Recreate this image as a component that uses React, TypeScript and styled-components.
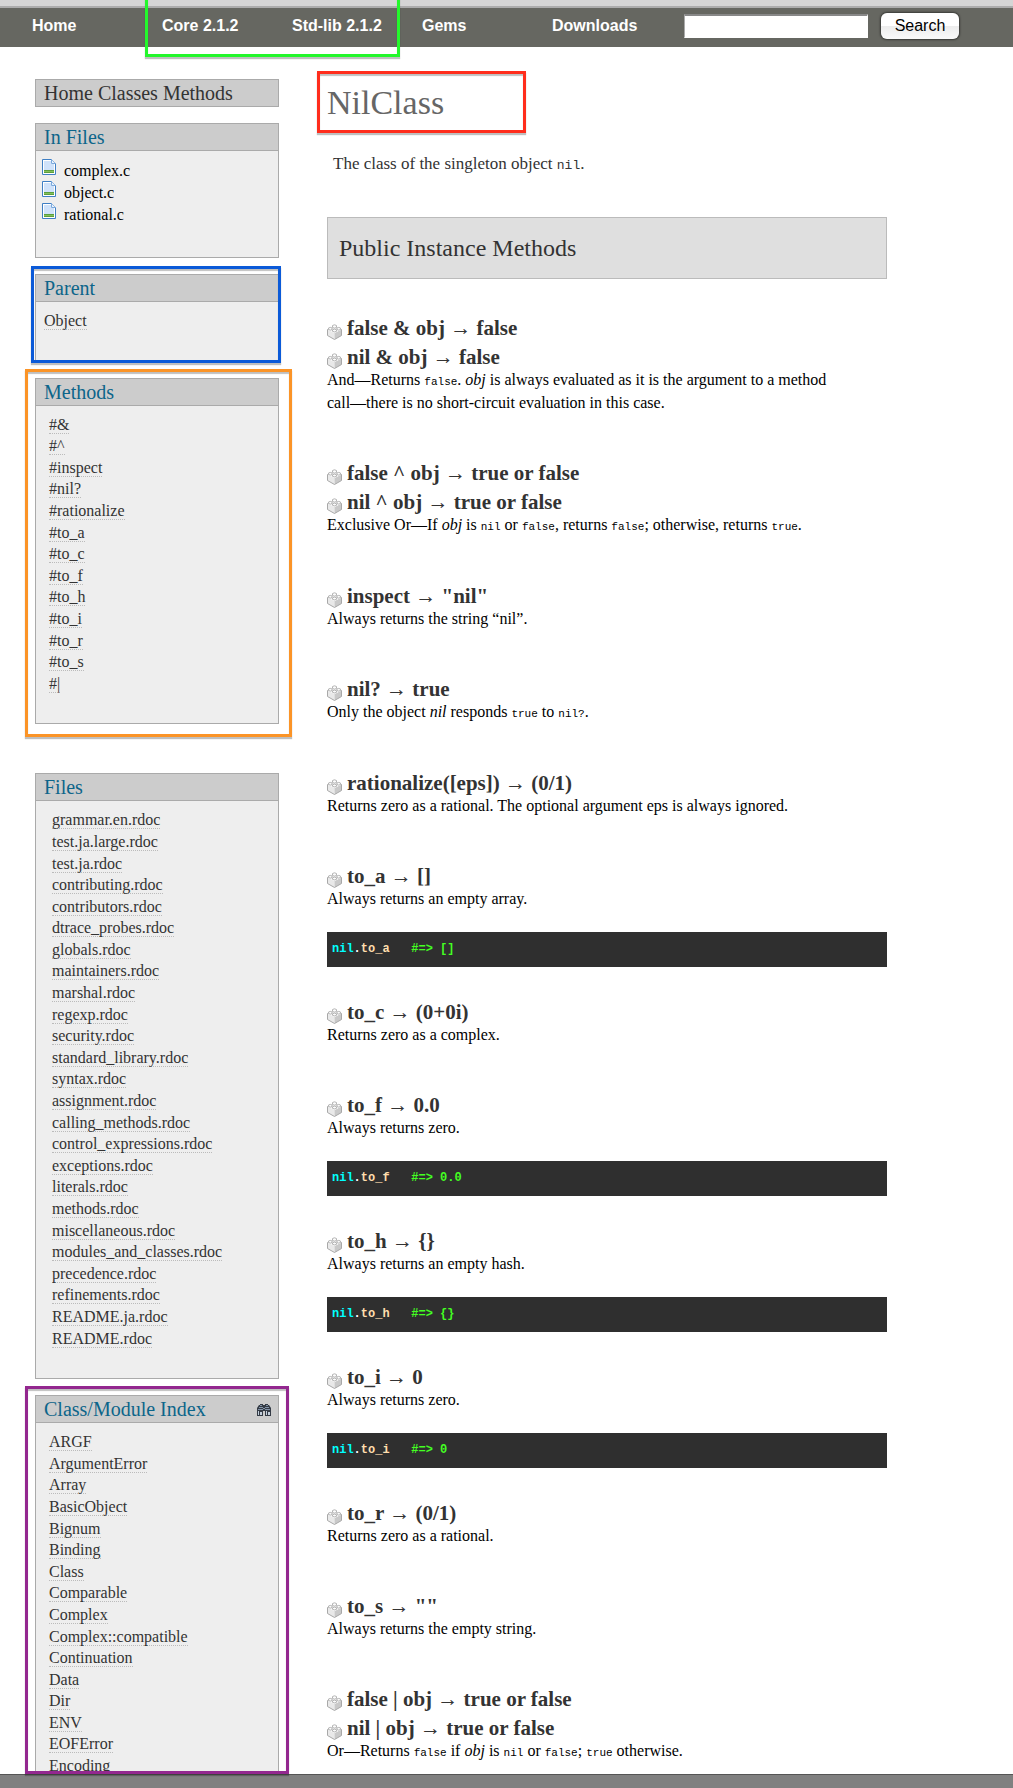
import React from "react";
import styled, { createGlobalStyle } from "styled-components";

const serif = `"Liberation Serif", "Times New Roman", serif`;
const sans = `"Liberation Sans", Arial, sans-serif`;
const mono = `"Liberation Mono", "Courier New", monospace`;

const GlobalStyle = createGlobalStyle`
  * { box-sizing: border-box; }
  body { margin: 0; background: #fff; color: #000; font-family: ${serif}; }
  h1, h2, h3, p, pre, ul { margin: 0; padding: 0; font-weight: normal; }
  ul { list-style: none; }
  a { color: inherit; text-decoration: none; }
`;

const Page = styled.div`
  display: flex;
  flex-direction: column;
  height: 100vh;
  overflow: hidden;
`;

const TopStrip = styled.div`
  flex: none;
  height: 8px;
  background: #d5d5d5;
  border-bottom: 2px solid #acacac;
`;

const NavBar = styled.header`
  flex: none;
  display: flex;
  align-items: center;
  height: 39px;
  padding-left: 32px;
  padding-bottom: 4px;
  background: #666761;
`;

const NavGroup = styled.nav`
  position: relative;
  display: flex;
`;

const NavLink = styled.a`
  width: 130px;
  color: #fff;
  font: bold 16px/20px ${sans};
`;

const SearchForm = styled.form`
  display: flex;
  align-items: center;
  gap: 13px;
  padding-left: 2px;
`;

const SearchInput = styled.input`
  width: 184px;
  height: 24px;
  padding: 0 4px;
  background: #fff;
  border: 1px solid #fff;
  border-top: 2px solid #888;
  border-left-color: #aaa;
  border-radius: 0;
  font: 16px/20px ${sans};
`;

const SearchButton = styled.button`
  width: 78px;
  height: 26px;
  padding: 0;
  color: #000;
  background: linear-gradient(#fff 50%, #ececec 50%, #fafafa);
  border: 0;
  border-radius: 6px;
  box-shadow: 0 0 2px 1px rgba(0, 0, 0, 0.45);
  font: 16px/20px ${sans};
`;

const Main = styled.main`
  flex: 1;
  min-height: 0;
  display: flex;
  gap: 48px;
  padding: 32px 32px 0 35px;
`;

const Sidebar = styled.aside`
  flex: none;
  width: 244px;
  display: flex;
  flex-direction: column;
  gap: 16px;
`;

const PanelWrap = styled.div<{ $spaceAfter?: boolean; $fill?: boolean }>`
  position: relative;
  flex: ${(p) => (p.$fill ? "1" : "none")};
  min-height: 0;
  margin-bottom: ${(p) => (p.$spaceAfter ? "33px" : "0")};
`;

const Panel = styled.section`
  max-height: 100%;
  overflow: hidden;
  background: #eee;
  border: 1px solid #aaa;
`;

const PanelTitle = styled.h2`
  display: flex;
  align-items: center;
  justify-content: space-between;
  height: 27px;
  padding: 0 7px 0 8px;
  color: #0c658a;
  background: #ccc;
  border-bottom: 1px solid #aaa;
  font-size: 20px;
  line-height: 24px;
`;

const LinkTrail = styled.nav`
  height: 28px;
  padding-left: 8px;
  color: #333;
  background: #ccc;
  border: 1px solid #aaa;
  font-size: 20px;
  line-height: 26px;
`;

const SourceList = styled.ul`
  padding: 8px 6px 32px;
`;

const SourceItem = styled.li`
  display: flex;
  align-items: flex-start;
  gap: 8px;
  height: 22px;
  font-size: 16px;
  line-height: 24px;
`;

const LinkList = styled.ul<{ $indent: number }>`
  padding: 8px 0 29px ${(p) => p.$indent}px;
  color: #333;
  font-size: 16px;
  line-height: 1.35;
`;

const DottedLink = styled.a`
  border-bottom: 1px dotted #bbb;
`;

const Outline = styled.span<{ $color: string; $inset: string }>`
  position: absolute;
  z-index: 2;
  inset: ${(p) => p.$inset};
  border: 3px solid ${(p) => p.$color};
  box-shadow: 0 2px 1px rgba(0, 0, 0, 0.25), inset 0 2px 1px rgba(0, 0, 0, 0.25);
  pointer-events: none;
`;

const Content = styled.article`
  flex: 1;
  min-width: 0;
  max-width: 560px;
`;

const TitleWrap = styled.div`
  position: relative;
  max-width: 189px;
`;

const Title = styled.h1`
  color: #666;
  font-size: 34px;
  line-height: 48px;
`;

const Intro = styled.p`
  padding: 25px 6px 41px;
  color: #333;
  font-size: 17px;
  line-height: 24px;

  code { font: 13px/20px ${mono}; }
`;

const SectionTitle = styled.h2`
  margin-bottom: 37px;
  padding: 0 11px;
  color: #333;
  background: #dfdfdf;
  border: 1px solid #bbb;
  font-size: 24px;
  line-height: 60px;
`;

const Method = styled.section<{ $hasCode?: boolean }>`
  padding-bottom: ${(p) => (p.$hasCode ? "33px" : "47px")};
`;

const Signatures = styled.div`
  display: grid;
  gap: 5px;
`;

const Signature = styled.h3`
  display: flex;
  align-items: center;
  gap: 5px;
  height: 24px;
  color: #333;
  font-size: 21px;
  font-weight: bold;
  line-height: 24px;

  svg { margin-top: 8px; }
`;

const Description = styled.p`
  padding-right: 48px;
  font-size: 16px;
  line-height: 22px;

  code { font: 11px/20px ${mono}; }
`;

const Unbroken = styled.span`
  white-space: nowrap;
`;

const Example = styled.pre`
  height: 35px;
  margin-top: 22px;
  padding: 0 5px;
  color: #fff;
  background: #2f2f2f;
  font: bold 12px/35px ${mono};
`;

const Keyword = styled.span`
  color: #0ff;
`;

const Identifier = styled.span`
  color: #ffdead;
`;

const Comment = styled.span`
  color: #4f2;
`;

const BottomBar = styled.footer`
  flex: none;
  height: 14px;
  background: #808080;
  border-top: 1px solid #555;
`;

const FileIcon = () => (
  <svg width="14" height="16" viewBox="0 0 14 16" aria-hidden="true">
    <path d="M.5.5h9l4 4v11H.5z" fill="#fff" stroke="#3f7fc4" />
    <path d="M2 2h7v3h3v6H2z" fill="#cfe2fa" />
    <path d="M9.500 .5v4h4" fill="#e9f2fd" stroke="#7aa9dc" />
    <path d="M2 11h10v3H2z" fill="#5a9e3e" />
    <path d="M2 12h10v1H2z" fill="#86c05c" />
  </svg>
);

const BrickIcon = () => (
  <svg width="15" height="16" viewBox="0 0 15 16" aria-hidden="true">
    <path d="M.5 5.500 7.500 9v6.500L.5 11.500z" fill="#e9e9e9" />
    <path d="M14.500 5.500 7.500 9v6.500l7-4z" fill="#c9c9c9" />
    <path d="M.5 5.500 7.500 2l7 3.500L7.500 9z" fill="#f8f8f8" />
    <path
      d="M.5 5.500v6l7 4 7-4v-6M.5 5.500l2-1M14.500 5.500l-2-1"
      fill="none"
      stroke="#a8a8a8"
    />
    <g fill="#fcfcfc" stroke="#b4b4b4">
      <path d="M5.500 1.500v2q2 1.200 4 0v-2q-2-1.400-4 0z" />
      <path d="M1.500 4v1.500q2 1.200 3.600 0V4q-1.800-1.200-3.600 0z" />
      <path d="M9.900 4v1.500q1.800 1.200 3.600 0V4q-1.800-1.200-3.600 0z" />
      <path d="M5.500 5.800v1.500q2 1.200 4 0V5.800q-2-1.400-4 0z" />
    </g>
  </svg>
);

const FindIcon = () => (
  <svg width="14" height="13" viewBox="0 0 14 13" aria-hidden="true">
    <path d="M3 1h3v1h2V1h3v1h1l2 3v8H8V8H6v5H0V5l2-3h1z" fill="#343b45" />
    <path d="M3 2h2v1H3zM9 2h2v1H9zM2 4h4v1H2zM8 4h4v1H8zM6 5h2v1H6zM1 6h5v1H1zM8 6h5v1H8z" fill="#8293a8" />
    <path d="M1 8h1v4H1zM3 9h2v3H3zM9 8h1v4H9zM11 9h2v3h-2z" fill="#c3cedb" />
  </svg>
);

const sources = ["complex.c", "object.c", "rational.c"];

const methodLinks = [
  "#&", "#^", "#inspect", "#nil?", "#rationalize", "#to_a", "#to_c",
  "#to_f", "#to_h", "#to_i", "#to_r", "#to_s", "#|",
];

const files = [
  "grammar.en.rdoc", "test.ja.large.rdoc", "test.ja.rdoc", "contributing.rdoc",
  "contributors.rdoc", "dtrace_probes.rdoc", "globals.rdoc", "maintainers.rdoc",
  "marshal.rdoc", "regexp.rdoc", "security.rdoc", "standard_library.rdoc",
  "syntax.rdoc", "assignment.rdoc", "calling_methods.rdoc",
  "control_expressions.rdoc", "exceptions.rdoc", "literals.rdoc", "methods.rdoc",
  "miscellaneous.rdoc", "modules_and_classes.rdoc", "precedence.rdoc",
  "refinements.rdoc", "README.ja.rdoc", "README.rdoc",
];

const classes = [
  "ARGF", "ArgumentError", "Array", "BasicObject", "Bignum", "Binding", "Class",
  "Comparable", "Complex", "Complex::compatible", "Continuation", "Data", "Dir",
  "ENV", "EOFError", "Encoding",
];

type MethodDoc = {
  signatures: string[];
  text: React.ReactNode;
  example?: { call: string; result: string };
};

const methods: MethodDoc[] = [
  {
    signatures: ["false & obj → false", "nil & obj → false"],
    text: (
      <>
        And—Returns <code>false</code>. <em>obj</em> is always evaluated as it is the
        argument to a method <Unbroken>call—there</Unbroken> is no short-circuit
        evaluation in this case.
      </>
    ),
  },
  {
    signatures: ["false ^ obj → true or false", "nil ^ obj → true or false"],
    text: (
      <>
        Exclusive Or—If <em>obj</em> is <code>nil</code> or <code>false</code>, returns{" "}
        <code>false</code>; otherwise, returns <code>true</code>.
      </>
    ),
  },
  { signatures: ['inspect → "nil"'], text: "Always returns the string “nil”." },
  {
    signatures: ["nil? → true"],
    text: (
      <>
        Only the object <em>nil</em> responds <code>true</code> to <code>nil?</code>.
      </>
    ),
  },
  {
    signatures: ["rationalize([eps]) → (0/1)"],
    text: "Returns zero as a rational. The optional argument eps is always ignored.",
  },
  {
    signatures: ["to_a → []"],
    text: "Always returns an empty array.",
    example: { call: "to_a", result: "[]" },
  },
  { signatures: ["to_c → (0+0i)"], text: "Returns zero as a complex." },
  {
    signatures: ["to_f → 0.0"],
    text: "Always returns zero.",
    example: { call: "to_f", result: "0.0" },
  },
  {
    signatures: ["to_h → {}"],
    text: "Always returns an empty hash.",
    example: { call: "to_h", result: "{}" },
  },
  {
    signatures: ["to_i → 0"],
    text: "Always returns zero.",
    example: { call: "to_i", result: "0" },
  },
  { signatures: ["to_r → (0/1)"], text: "Returns zero as a rational." },
  { signatures: ['to_s → ""'], text: "Always returns the empty string." },
  {
    signatures: ["false | obj → true or false", "nil | obj → true or false"],
    text: (
      <>
        Or—Returns <code>false</code> if <em>obj</em> is <code>nil</code> or{" "}
        <code>false</code>; <code>true</code> otherwise.
      </>
    ),
  },
];

const Links = ({ items, indent }: { items: string[]; indent: number }) => (
  <LinkList $indent={indent}>
    {items.map((item) => (
      <li key={item}>
        <DottedLink href="#">{item}</DottedLink>
      </li>
    ))}
  </LinkList>
);

export default function App() {
  return (
    <Page>
      <GlobalStyle />
      <TopStrip />
      <NavBar>
        <NavGroup>
          <NavLink href="#">Home</NavLink>
        </NavGroup>
        <NavGroup>
          <NavLink href="#">Core 2.1.2</NavLink>
          <NavLink href="#">Std-lib 2.1.2</NavLink>
          <Outline $color="#24f72c" $inset="-30px 22px -21px -17px" />
        </NavGroup>
        <NavGroup>
          <NavLink href="#">Gems</NavLink>
          <NavLink href="#">Downloads</NavLink>
        </NavGroup>
        <SearchForm onSubmit={(e) => e.preventDefault()}>
          <SearchInput type="text" aria-label="Search the documentation" />
          <SearchButton type="submit">Search</SearchButton>
        </SearchForm>
      </NavBar>
      <Main>
        <Sidebar>
          <LinkTrail>
            <a href="#">Home</a> <a href="#">Classes</a> <a href="#">Methods</a>
          </LinkTrail>
          <PanelWrap>
            <Panel>
              <PanelTitle>In Files</PanelTitle>
              <SourceList>
                {sources.map((name) => (
                  <SourceItem key={name}>
                    <FileIcon />
                    <a href="#">{name}</a>
                  </SourceItem>
                ))}
              </SourceList>
            </Panel>
          </PanelWrap>
          <PanelWrap>
            <Panel>
              <PanelTitle>Parent</PanelTitle>
              <Links items={["Object"]} indent={8} />
            </Panel>
            <Outline $color="#0b5ad8" $inset="-8px -2px -1px -4px" />
          </PanelWrap>
          <PanelWrap $spaceAfter>
            <Panel>
              <PanelTitle>Methods</PanelTitle>
              <Links items={methodLinks} indent={13} />
            </Panel>
            <Outline $color="#fb9427" $inset="-9px -13px -13px -10px" />
          </PanelWrap>
          <PanelWrap>
            <Panel>
              <PanelTitle>Files</PanelTitle>
              <Links items={files} indent={16} />
            </Panel>
          </PanelWrap>
          <PanelWrap $fill>
            <Panel>
              <PanelTitle>
                Class/Module Index
                <FindIcon />
              </PanelTitle>
              <Links items={classes} indent={13} />
            </Panel>
            <Outline $color="#93278f" $inset="-9px -10px 0 -10px" />
          </PanelWrap>
        </Sidebar>
        <Content>
          <TitleWrap>
            <Title>NilClass</Title>
            <Outline $color="#ff2d1c" $inset="-8px -10px -6px -10px" />
          </TitleWrap>
          <Intro>
            The class of the singleton object <code>nil</code>.
          </Intro>
          <SectionTitle>Public Instance Methods</SectionTitle>
          {methods.map((method) => (
            <Method key={method.signatures[0]} $hasCode={Boolean(method.example)}>
              <Signatures>
                {method.signatures.map((signature) => (
                  <Signature key={signature}>
                    <BrickIcon />
                    {signature}
                  </Signature>
                ))}
              </Signatures>
              <Description>{method.text}</Description>
              {method.example && (
                <Example>
                  <Keyword>nil</Keyword>.<Identifier>{method.example.call}</Identifier>
                  {"   "}
                  <Comment>#=&gt; {method.example.result}</Comment>
                </Example>
              )}
            </Method>
          ))}
        </Content>
      </Main>
      <BottomBar />
    </Page>
  );
}
